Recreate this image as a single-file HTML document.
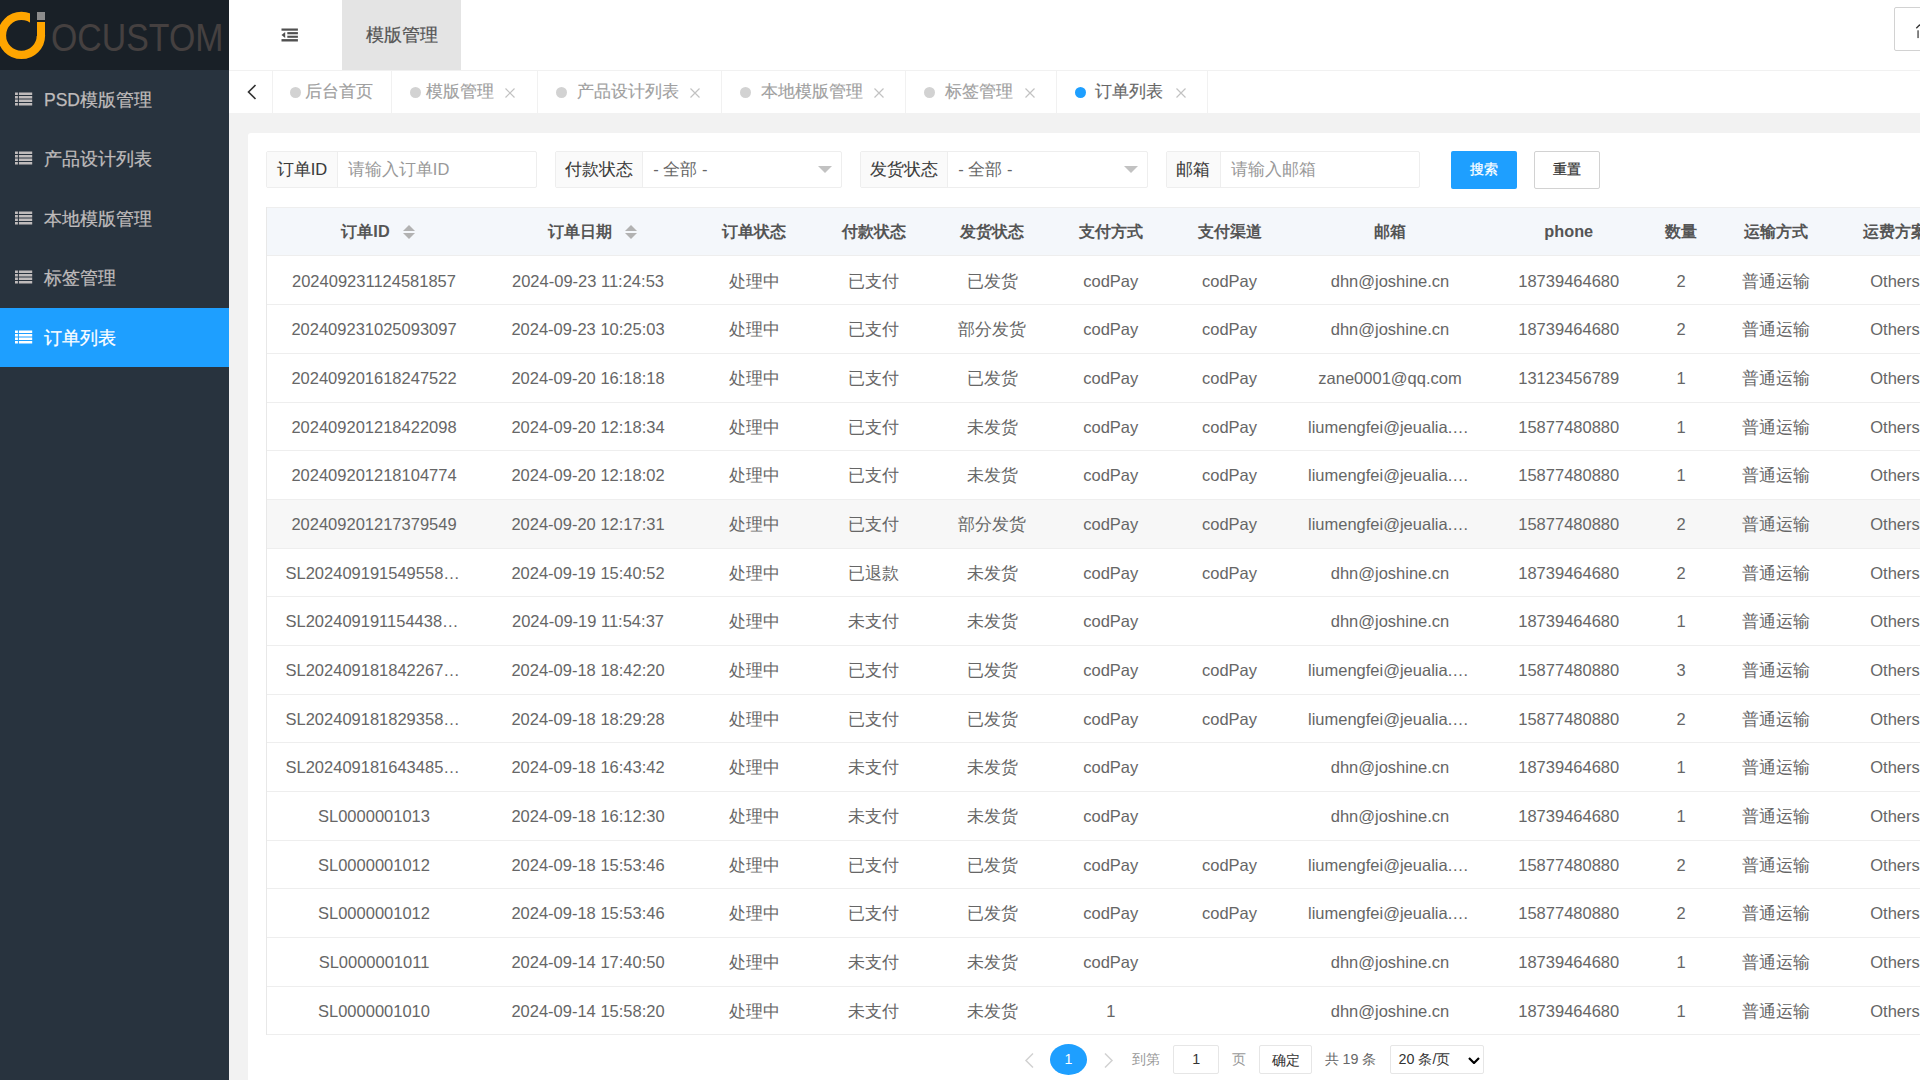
<!DOCTYPE html>
<html><head><meta charset="utf-8"><style>
*{margin:0;padding:0;box-sizing:border-box}
html,body{width:1920px;height:1080px;overflow:hidden;background:#f2f2f2;font-family:"Liberation Sans",sans-serif;position:relative}
.abs{position:absolute}
#side{position:absolute;left:0;top:0;width:229px;height:1080px;background:#28333e}
#logo{position:absolute;left:0;top:0;width:229px;height:70px;background:#192027;overflow:hidden}
.mi{position:absolute;left:0;width:229px;height:59.4px;color:rgb(191,187,187);font-size:17.5px}
.mi.active{background:#1e9fff;color:#fff}
.mi .ic{position:absolute;left:15px;top:22.4px;width:18px;height:14px;line-height:0}
.mi .mt{position:absolute;left:44px;top:1px;line-height:59.4px;white-space:nowrap}
#header{position:absolute;left:229px;top:0;width:1691px;height:70px;background:#fff}
#hdrtab{position:absolute;left:342px;top:0;width:119px;height:70px;background:#e4e4e4;color:#565656;font-size:17.5px;line-height:70px;text-align:center}
#tabbar{position:absolute;left:229px;top:70px;width:1691px;height:43px;background:#fff;border-top:1px solid #f1f1f1}
.tsep{position:absolute;top:71px;width:1px;height:42px;background:#f1f1f1}
.tdot{position:absolute;top:86.7px;width:11px;height:11px;border-radius:50%}
.ttxt{position:absolute;top:70px;height:43px;line-height:43px;font-size:16.6px;white-space:nowrap}
.tclose{position:absolute;top:88px;width:10px;height:10px;line-height:0}
#card{position:absolute;left:248px;top:132.5px;width:1700px;height:1000px;background:#fff;border-radius:3px}
.ig{position:absolute;top:151.2px;height:37.2px;border:1px solid #eee;border-radius:2px;background:#fff;font-size:16.5px}
.ig .lab{position:absolute;left:0;top:0;height:100%;background:#fafafa;border-right:1px solid #eee;color:#3a3a3a;line-height:35px;text-align:center;white-space:nowrap}
.ig .val{position:absolute;top:0;height:100%;line-height:35px;white-space:nowrap;color:#999}
.ig .val.sel{color:#666}
.tri{position:absolute;top:13.7px;width:0;height:0;border-left:7px solid transparent;border-right:7px solid transparent;border-top:7.5px solid #c2c2c2}
.btn{position:absolute;top:150.8px;height:37.9px;border-radius:2px;font-size:14.3px;line-height:37.9px;text-align:center}
.thead{position:absolute;left:266.5px;width:1700px;background:#f4f7fb;border-top:1px solid #eee;border-bottom:1px solid #eee}
#tblleft{position:absolute;left:266px;top:207px;width:1px;height:828px;background:#e8e8e8}
.th{position:absolute;display:flex;align-items:center;justify-content:center;font-weight:bold;font-size:16.3px;color:#555;white-space:nowrap}
.th .sort{margin-left:13px;margin-right:-8px}
.tr{position:absolute;left:266.5px;width:1700px;border-bottom:1px solid #eee}
.tr.hover{background:#f7f7f7}
.td{position:absolute;padding:0 19px;text-align:center;overflow:hidden;text-overflow:ellipsis;white-space:nowrap;font-size:16.5px;color:#666}
#pager{font-size:14.3px}
.mi .mt,#hdrtab,.btn{-webkit-text-stroke:0.25px currentColor}
.ig .lab{-webkit-text-stroke:0.08px currentColor}
.ttxt{-webkit-text-stroke:0.15px currentColor}
</style></head><body>
<div id="side">
<div id="logo"><svg width="229" height="70" viewBox="0 0 229 70" style="position:absolute;left:0;top:0">
<circle cx="21.4" cy="35.4" r="19.5" fill="none" stroke="#ffa500" stroke-width="8.4"/>
<rect x="30" y="0" width="7" height="36" fill="#192027"/><rect x="37" y="0" width="10" height="22" fill="#192027"/>
<rect x="37" y="22" width="8" height="13.4" fill="#ffa500"/>
<rect x="37" y="12" width="8" height="8" fill="#8c8c8c"/>
<text x="51" y="51.3" font-family="Liberation Sans" font-size="39.6" fill="#454040" textLength="172.5" lengthAdjust="spacingAndGlyphs">OCUSTOM</text>
</svg></div>
<div class="mi" style="top:70.0px"><span class="ic" style="top:22.00px"><svg width="18" height="14" viewBox="0 0 18 14" style="display:block"><g fill="currentColor"><rect x="0" y="0.5" width="2.9" height="2.5"/><rect x="3.9" y="0.5" width="13.3" height="2.5"/><rect x="0" y="4" width="2.9" height="2.5"/><rect x="3.9" y="4" width="13.3" height="2.5"/><rect x="0" y="7.5" width="2.9" height="2.5"/><rect x="3.9" y="7.5" width="13.3" height="2.5"/><rect x="0" y="11" width="2.9" height="2.5"/><rect x="3.9" y="11" width="13.3" height="2.5"/></g></svg></span><span class="mt">PSD模版管理</span></div>
<div class="mi" style="top:129.4px"><span class="ic" style="top:21.60px"><svg width="18" height="14" viewBox="0 0 18 14" style="display:block"><g fill="currentColor"><rect x="0" y="0.5" width="2.9" height="2.5"/><rect x="3.9" y="0.5" width="13.3" height="2.5"/><rect x="0" y="4" width="2.9" height="2.5"/><rect x="3.9" y="4" width="13.3" height="2.5"/><rect x="0" y="7.5" width="2.9" height="2.5"/><rect x="3.9" y="7.5" width="13.3" height="2.5"/><rect x="0" y="11" width="2.9" height="2.5"/><rect x="3.9" y="11" width="13.3" height="2.5"/></g></svg></span><span class="mt">产品设计列表</span></div>
<div class="mi" style="top:188.8px"><span class="ic" style="top:22.20px"><svg width="18" height="14" viewBox="0 0 18 14" style="display:block"><g fill="currentColor"><rect x="0" y="0.5" width="2.9" height="2.5"/><rect x="3.9" y="0.5" width="13.3" height="2.5"/><rect x="0" y="4" width="2.9" height="2.5"/><rect x="3.9" y="4" width="13.3" height="2.5"/><rect x="0" y="7.5" width="2.9" height="2.5"/><rect x="3.9" y="7.5" width="13.3" height="2.5"/><rect x="0" y="11" width="2.9" height="2.5"/><rect x="3.9" y="11" width="13.3" height="2.5"/></g></svg></span><span class="mt">本地模版管理</span></div>
<div class="mi" style="top:248.2px"><span class="ic" style="top:21.80px"><svg width="18" height="14" viewBox="0 0 18 14" style="display:block"><g fill="currentColor"><rect x="0" y="0.5" width="2.9" height="2.5"/><rect x="3.9" y="0.5" width="13.3" height="2.5"/><rect x="0" y="4" width="2.9" height="2.5"/><rect x="3.9" y="4" width="13.3" height="2.5"/><rect x="0" y="7.5" width="2.9" height="2.5"/><rect x="3.9" y="7.5" width="13.3" height="2.5"/><rect x="0" y="11" width="2.9" height="2.5"/><rect x="3.9" y="11" width="13.3" height="2.5"/></g></svg></span><span class="mt">标签管理</span></div>
<div class="mi active" style="top:307.6px"><span class="ic" style="top:22.40px"><svg width="18" height="14" viewBox="0 0 18 14" style="display:block"><g fill="currentColor"><rect x="0" y="0.5" width="2.9" height="2.5"/><rect x="3.9" y="0.5" width="13.3" height="2.5"/><rect x="0" y="4" width="2.9" height="2.5"/><rect x="3.9" y="4" width="13.3" height="2.5"/><rect x="0" y="7.5" width="2.9" height="2.5"/><rect x="3.9" y="7.5" width="13.3" height="2.5"/><rect x="0" y="11" width="2.9" height="2.5"/><rect x="3.9" y="11" width="13.3" height="2.5"/></g></svg></span><span class="mt">订单列表</span></div>
</div>
<div id="header">
<svg style="position:absolute;left:52px;top:28px" width="18" height="15" viewBox="0 0 18 15"><rect x="6.3" y="6" width="10.6" height="2" fill="#cfcfcf"/><g fill="#505050"><rect x="0.5" y="0.5" width="16.4" height="2.2"/><rect x="6.3" y="4.1" width="10.6" height="1.9"/><rect x="6.3" y="8" width="10.6" height="1.8"/><path d="M0.5 7L4.2 4.1V9.9Z"/><rect x="0.5" y="11.1" width="16.4" height="2.4"/></g></svg>
</div>
<div id="hdrtab">模版管理</div>
<div style="position:absolute;left:1894.4px;top:7.4px;width:40px;height:44px;border:1px solid #d2d2d2;border-radius:2px;background:#fff"></div>
<svg style="position:absolute;left:1914px;top:22px" width="6" height="18" viewBox="0 0 6 18"><path d="M2.3 6.2L6 2.5" stroke="#333" stroke-width="1.3" fill="none"/><rect x="3.4" y="8.3" width="1.3" height="7.8" fill="#444"/></svg>
<div id="tabbar"></div>
<svg style="position:absolute;left:247px;top:84px" width="10" height="16" viewBox="0 0 10 16"><path d="M8.5 1L1.5 8L8.5 15" fill="none" stroke="#333" stroke-width="1.6"/></svg>
<div class="tsep" style="left:391.0px"></div>
<div class="tdot" style="left:289.8px;background:#d2d2d2"></div>
<div class="ttxt" style="left:305.2px;color:#a0a0a0">后台首页</div>
<div class="tsep" style="left:536.9px"></div>
<div class="tdot" style="left:409.8px;background:#d2d2d2"></div>
<div class="ttxt" style="left:426.0px;color:#a0a0a0">模版管理</div>
<div class="tclose" style="left:505.4px"><svg width="10" height="10" viewBox="0 0 10 10"><path d="M0.5 0.5L9.5 9.5M9.5 0.5L0.5 9.5" stroke="#c2c2c2" stroke-width="1.2"/></svg></div>
<div class="tsep" style="left:720.8px"></div>
<div class="tdot" style="left:556.2px;background:#d2d2d2"></div>
<div class="ttxt" style="left:577.1px;color:#a0a0a0">产品设计列表</div>
<div class="tclose" style="left:690.0px"><svg width="10" height="10" viewBox="0 0 10 10"><path d="M0.5 0.5L9.5 9.5M9.5 0.5L0.5 9.5" stroke="#c2c2c2" stroke-width="1.2"/></svg></div>
<div class="tsep" style="left:905.4px"></div>
<div class="tdot" style="left:740.0px;background:#d2d2d2"></div>
<div class="ttxt" style="left:761.3px;color:#a0a0a0">本地模版管理</div>
<div class="tclose" style="left:873.7px"><svg width="10" height="10" viewBox="0 0 10 10"><path d="M0.5 0.5L9.5 9.5M9.5 0.5L0.5 9.5" stroke="#c2c2c2" stroke-width="1.2"/></svg></div>
<div class="tsep" style="left:1055.8px"></div>
<div class="tdot" style="left:924.0px;background:#d2d2d2"></div>
<div class="ttxt" style="left:945.3px;color:#a0a0a0">标签管理</div>
<div class="tclose" style="left:1025.0px"><svg width="10" height="10" viewBox="0 0 10 10"><path d="M0.5 0.5L9.5 9.5M9.5 0.5L0.5 9.5" stroke="#c2c2c2" stroke-width="1.2"/></svg></div>
<div class="tsep" style="left:1206.8px"></div>
<div class="tdot" style="left:1075.0px;background:#1e9fff"></div>
<div class="ttxt" style="left:1095.4px;color:#666">订单列表</div>
<div class="tclose" style="left:1175.5px"><svg width="10" height="10" viewBox="0 0 10 10"><path d="M0.5 0.5L9.5 9.5M9.5 0.5L0.5 9.5" stroke="#c2c2c2" stroke-width="1.2"/></svg></div>
<div class="tsep" style="left:272.2px"></div>
<div id="card"></div>
<div class="ig" style="left:266.3px;width:271.2px"><div class="lab" style="width:70.4px">订单ID</div><div class="val" style="left:80.5px">请输入订单ID</div></div>
<div class="ig" style="left:555.3px;width:287.2px"><div class="lab" style="width:87.2px">付款状态</div><div class="val sel" style="left:97px">- 全部 -</div><div class="tri" style="left:262px"></div></div>
<div class="ig" style="left:860.3px;width:288px"><div class="lab" style="width:87.2px">发货状态</div><div class="val sel" style="left:97px">- 全部 -</div><div class="tri" style="left:263px"></div></div>
<div class="ig" style="left:1166.3px;width:254px"><div class="lab" style="width:53.4px">邮箱</div><div class="val" style="left:63.5px">请输入邮箱</div></div>
<div class="btn" style="left:1450.8px;width:66.2px;background:#1e9fff;color:#fff">搜索</div>
<div class="btn" style="left:1534.2px;width:65.8px;background:#fff;border:1px solid #d2d2d2;color:#333;line-height:35.9px">重置</div>
<div class="thead" style="top:207px;height:49px"></div>
<div class="th" style="left:266.5px;width:215.0px;top:207px;height:49px"><span>订单ID</span><svg class="sort" width="12" height="14" viewBox="0 0 12 14"><path d="M6 0L12 6H0Z" fill="#b2b2b2"/><path d="M6 14L12 8H0Z" fill="#b2b2b2"/></svg></div>
<div class="th" style="left:481.5px;width:213.0px;top:207px;height:49px"><span>订单日期</span><svg class="sort" width="12" height="14" viewBox="0 0 12 14"><path d="M6 0L12 6H0Z" fill="#b2b2b2"/><path d="M6 14L12 8H0Z" fill="#b2b2b2"/></svg></div>
<div class="th" style="left:694.5px;width:119.5px;top:207px;height:49px"><span>订单状态</span></div>
<div class="th" style="left:814px;width:119px;top:207px;height:49px"><span>付款状态</span></div>
<div class="th" style="left:933px;width:118.5px;top:207px;height:49px"><span>发货状态</span></div>
<div class="th" style="left:1051.5px;width:118.5px;top:207px;height:49px"><span>支付方式</span></div>
<div class="th" style="left:1170px;width:119px;top:207px;height:49px"><span>支付渠道</span></div>
<div class="th" style="left:1289px;width:202px;top:207px;height:49px"><span>邮箱</span></div>
<div class="th" style="left:1491px;width:155.5px;top:207px;height:49px"><span>phone</span></div>
<div class="th" style="left:1646.5px;width:69.0px;top:207px;height:49px"><span>数量</span></div>
<div class="th" style="left:1715.5px;width:121.5px;top:207px;height:49px"><span>运输方式</span></div>
<div class="th" style="left:1837px;width:116px;top:207px;height:49px"><span>运费方案</span></div>
<div class="tr" style="top:256.50px;height:48.68px"></div>
<div class="td" style="left:266.5px;width:215.0px;top:256.50px;height:48.68px;line-height:48.68px">202409231124581857</div>
<div class="td" style="left:481.5px;width:213.0px;top:256.50px;height:48.68px;line-height:48.68px">2024-09-23 11:24:53</div>
<div class="td" style="left:694.5px;width:119.5px;top:256.50px;height:48.68px;line-height:48.68px">处理中</div>
<div class="td" style="left:814px;width:119px;top:256.50px;height:48.68px;line-height:48.68px">已支付</div>
<div class="td" style="left:933px;width:118.5px;top:256.50px;height:48.68px;line-height:48.68px">已发货</div>
<div class="td" style="left:1051.5px;width:118.5px;top:256.50px;height:48.68px;line-height:48.68px">codPay</div>
<div class="td" style="left:1170px;width:119px;top:256.50px;height:48.68px;line-height:48.68px">codPay</div>
<div class="td" style="left:1289px;width:202px;top:256.50px;height:48.68px;line-height:48.68px">dhn@joshine.cn</div>
<div class="td" style="left:1491px;width:155.5px;top:256.50px;height:48.68px;line-height:48.68px">18739464680</div>
<div class="td" style="left:1646.5px;width:69.0px;top:256.50px;height:48.68px;line-height:48.68px">2</div>
<div class="td" style="left:1715.5px;width:121.5px;top:256.50px;height:48.68px;line-height:48.68px">普通运输</div>
<div class="td" style="left:1837px;width:116px;top:256.50px;height:48.68px;line-height:48.68px">Others</div>
<div class="tr" style="top:305.18px;height:48.68px"></div>
<div class="td" style="left:266.5px;width:215.0px;top:305.18px;height:48.68px;line-height:48.68px">202409231025093097</div>
<div class="td" style="left:481.5px;width:213.0px;top:305.18px;height:48.68px;line-height:48.68px">2024-09-23 10:25:03</div>
<div class="td" style="left:694.5px;width:119.5px;top:305.18px;height:48.68px;line-height:48.68px">处理中</div>
<div class="td" style="left:814px;width:119px;top:305.18px;height:48.68px;line-height:48.68px">已支付</div>
<div class="td" style="left:933px;width:118.5px;top:305.18px;height:48.68px;line-height:48.68px">部分发货</div>
<div class="td" style="left:1051.5px;width:118.5px;top:305.18px;height:48.68px;line-height:48.68px">codPay</div>
<div class="td" style="left:1170px;width:119px;top:305.18px;height:48.68px;line-height:48.68px">codPay</div>
<div class="td" style="left:1289px;width:202px;top:305.18px;height:48.68px;line-height:48.68px">dhn@joshine.cn</div>
<div class="td" style="left:1491px;width:155.5px;top:305.18px;height:48.68px;line-height:48.68px">18739464680</div>
<div class="td" style="left:1646.5px;width:69.0px;top:305.18px;height:48.68px;line-height:48.68px">2</div>
<div class="td" style="left:1715.5px;width:121.5px;top:305.18px;height:48.68px;line-height:48.68px">普通运输</div>
<div class="td" style="left:1837px;width:116px;top:305.18px;height:48.68px;line-height:48.68px">Others</div>
<div class="tr" style="top:353.86px;height:48.68px"></div>
<div class="td" style="left:266.5px;width:215.0px;top:353.86px;height:48.68px;line-height:48.68px">202409201618247522</div>
<div class="td" style="left:481.5px;width:213.0px;top:353.86px;height:48.68px;line-height:48.68px">2024-09-20 16:18:18</div>
<div class="td" style="left:694.5px;width:119.5px;top:353.86px;height:48.68px;line-height:48.68px">处理中</div>
<div class="td" style="left:814px;width:119px;top:353.86px;height:48.68px;line-height:48.68px">已支付</div>
<div class="td" style="left:933px;width:118.5px;top:353.86px;height:48.68px;line-height:48.68px">已发货</div>
<div class="td" style="left:1051.5px;width:118.5px;top:353.86px;height:48.68px;line-height:48.68px">codPay</div>
<div class="td" style="left:1170px;width:119px;top:353.86px;height:48.68px;line-height:48.68px">codPay</div>
<div class="td" style="left:1289px;width:202px;top:353.86px;height:48.68px;line-height:48.68px">zane0001@qq.com</div>
<div class="td" style="left:1491px;width:155.5px;top:353.86px;height:48.68px;line-height:48.68px">13123456789</div>
<div class="td" style="left:1646.5px;width:69.0px;top:353.86px;height:48.68px;line-height:48.68px">1</div>
<div class="td" style="left:1715.5px;width:121.5px;top:353.86px;height:48.68px;line-height:48.68px">普通运输</div>
<div class="td" style="left:1837px;width:116px;top:353.86px;height:48.68px;line-height:48.68px">Others</div>
<div class="tr" style="top:402.54px;height:48.68px"></div>
<div class="td" style="left:266.5px;width:215.0px;top:402.54px;height:48.68px;line-height:48.68px">202409201218422098</div>
<div class="td" style="left:481.5px;width:213.0px;top:402.54px;height:48.68px;line-height:48.68px">2024-09-20 12:18:34</div>
<div class="td" style="left:694.5px;width:119.5px;top:402.54px;height:48.68px;line-height:48.68px">处理中</div>
<div class="td" style="left:814px;width:119px;top:402.54px;height:48.68px;line-height:48.68px">已支付</div>
<div class="td" style="left:933px;width:118.5px;top:402.54px;height:48.68px;line-height:48.68px">未发货</div>
<div class="td" style="left:1051.5px;width:118.5px;top:402.54px;height:48.68px;line-height:48.68px">codPay</div>
<div class="td" style="left:1170px;width:119px;top:402.54px;height:48.68px;line-height:48.68px">codPay</div>
<div class="td" style="left:1289px;width:202px;top:402.54px;height:48.68px;line-height:48.68px">liumengfei@jeualia.com</div>
<div class="td" style="left:1491px;width:155.5px;top:402.54px;height:48.68px;line-height:48.68px">15877480880</div>
<div class="td" style="left:1646.5px;width:69.0px;top:402.54px;height:48.68px;line-height:48.68px">1</div>
<div class="td" style="left:1715.5px;width:121.5px;top:402.54px;height:48.68px;line-height:48.68px">普通运输</div>
<div class="td" style="left:1837px;width:116px;top:402.54px;height:48.68px;line-height:48.68px">Others</div>
<div class="tr" style="top:451.22px;height:48.68px"></div>
<div class="td" style="left:266.5px;width:215.0px;top:451.22px;height:48.68px;line-height:48.68px">202409201218104774</div>
<div class="td" style="left:481.5px;width:213.0px;top:451.22px;height:48.68px;line-height:48.68px">2024-09-20 12:18:02</div>
<div class="td" style="left:694.5px;width:119.5px;top:451.22px;height:48.68px;line-height:48.68px">处理中</div>
<div class="td" style="left:814px;width:119px;top:451.22px;height:48.68px;line-height:48.68px">已支付</div>
<div class="td" style="left:933px;width:118.5px;top:451.22px;height:48.68px;line-height:48.68px">未发货</div>
<div class="td" style="left:1051.5px;width:118.5px;top:451.22px;height:48.68px;line-height:48.68px">codPay</div>
<div class="td" style="left:1170px;width:119px;top:451.22px;height:48.68px;line-height:48.68px">codPay</div>
<div class="td" style="left:1289px;width:202px;top:451.22px;height:48.68px;line-height:48.68px">liumengfei@jeualia.com</div>
<div class="td" style="left:1491px;width:155.5px;top:451.22px;height:48.68px;line-height:48.68px">15877480880</div>
<div class="td" style="left:1646.5px;width:69.0px;top:451.22px;height:48.68px;line-height:48.68px">1</div>
<div class="td" style="left:1715.5px;width:121.5px;top:451.22px;height:48.68px;line-height:48.68px">普通运输</div>
<div class="td" style="left:1837px;width:116px;top:451.22px;height:48.68px;line-height:48.68px">Others</div>
<div class="tr hover" style="top:499.90px;height:48.68px"></div>
<div class="td" style="left:266.5px;width:215.0px;top:499.90px;height:48.68px;line-height:48.68px">202409201217379549</div>
<div class="td" style="left:481.5px;width:213.0px;top:499.90px;height:48.68px;line-height:48.68px">2024-09-20 12:17:31</div>
<div class="td" style="left:694.5px;width:119.5px;top:499.90px;height:48.68px;line-height:48.68px">处理中</div>
<div class="td" style="left:814px;width:119px;top:499.90px;height:48.68px;line-height:48.68px">已支付</div>
<div class="td" style="left:933px;width:118.5px;top:499.90px;height:48.68px;line-height:48.68px">部分发货</div>
<div class="td" style="left:1051.5px;width:118.5px;top:499.90px;height:48.68px;line-height:48.68px">codPay</div>
<div class="td" style="left:1170px;width:119px;top:499.90px;height:48.68px;line-height:48.68px">codPay</div>
<div class="td" style="left:1289px;width:202px;top:499.90px;height:48.68px;line-height:48.68px">liumengfei@jeualia.com</div>
<div class="td" style="left:1491px;width:155.5px;top:499.90px;height:48.68px;line-height:48.68px">15877480880</div>
<div class="td" style="left:1646.5px;width:69.0px;top:499.90px;height:48.68px;line-height:48.68px">2</div>
<div class="td" style="left:1715.5px;width:121.5px;top:499.90px;height:48.68px;line-height:48.68px">普通运输</div>
<div class="td" style="left:1837px;width:116px;top:499.90px;height:48.68px;line-height:48.68px">Others</div>
<div class="tr" style="top:548.58px;height:48.68px"></div>
<div class="td" style="left:266.5px;width:215.0px;top:548.58px;height:48.68px;line-height:48.68px">SL202409191549558123</div>
<div class="td" style="left:481.5px;width:213.0px;top:548.58px;height:48.68px;line-height:48.68px">2024-09-19 15:40:52</div>
<div class="td" style="left:694.5px;width:119.5px;top:548.58px;height:48.68px;line-height:48.68px">处理中</div>
<div class="td" style="left:814px;width:119px;top:548.58px;height:48.68px;line-height:48.68px">已退款</div>
<div class="td" style="left:933px;width:118.5px;top:548.58px;height:48.68px;line-height:48.68px">未发货</div>
<div class="td" style="left:1051.5px;width:118.5px;top:548.58px;height:48.68px;line-height:48.68px">codPay</div>
<div class="td" style="left:1170px;width:119px;top:548.58px;height:48.68px;line-height:48.68px">codPay</div>
<div class="td" style="left:1289px;width:202px;top:548.58px;height:48.68px;line-height:48.68px">dhn@joshine.cn</div>
<div class="td" style="left:1491px;width:155.5px;top:548.58px;height:48.68px;line-height:48.68px">18739464680</div>
<div class="td" style="left:1646.5px;width:69.0px;top:548.58px;height:48.68px;line-height:48.68px">2</div>
<div class="td" style="left:1715.5px;width:121.5px;top:548.58px;height:48.68px;line-height:48.68px">普通运输</div>
<div class="td" style="left:1837px;width:116px;top:548.58px;height:48.68px;line-height:48.68px">Others</div>
<div class="tr" style="top:597.26px;height:48.68px"></div>
<div class="td" style="left:266.5px;width:215.0px;top:597.26px;height:48.68px;line-height:48.68px">SL202409191154438123</div>
<div class="td" style="left:481.5px;width:213.0px;top:597.26px;height:48.68px;line-height:48.68px">2024-09-19 11:54:37</div>
<div class="td" style="left:694.5px;width:119.5px;top:597.26px;height:48.68px;line-height:48.68px">处理中</div>
<div class="td" style="left:814px;width:119px;top:597.26px;height:48.68px;line-height:48.68px">未支付</div>
<div class="td" style="left:933px;width:118.5px;top:597.26px;height:48.68px;line-height:48.68px">未发货</div>
<div class="td" style="left:1051.5px;width:118.5px;top:597.26px;height:48.68px;line-height:48.68px">codPay</div>
<div class="td" style="left:1170px;width:119px;top:597.26px;height:48.68px;line-height:48.68px"></div>
<div class="td" style="left:1289px;width:202px;top:597.26px;height:48.68px;line-height:48.68px">dhn@joshine.cn</div>
<div class="td" style="left:1491px;width:155.5px;top:597.26px;height:48.68px;line-height:48.68px">18739464680</div>
<div class="td" style="left:1646.5px;width:69.0px;top:597.26px;height:48.68px;line-height:48.68px">1</div>
<div class="td" style="left:1715.5px;width:121.5px;top:597.26px;height:48.68px;line-height:48.68px">普通运输</div>
<div class="td" style="left:1837px;width:116px;top:597.26px;height:48.68px;line-height:48.68px">Others</div>
<div class="tr" style="top:645.94px;height:48.68px"></div>
<div class="td" style="left:266.5px;width:215.0px;top:645.94px;height:48.68px;line-height:48.68px">SL202409181842267123</div>
<div class="td" style="left:481.5px;width:213.0px;top:645.94px;height:48.68px;line-height:48.68px">2024-09-18 18:42:20</div>
<div class="td" style="left:694.5px;width:119.5px;top:645.94px;height:48.68px;line-height:48.68px">处理中</div>
<div class="td" style="left:814px;width:119px;top:645.94px;height:48.68px;line-height:48.68px">已支付</div>
<div class="td" style="left:933px;width:118.5px;top:645.94px;height:48.68px;line-height:48.68px">已发货</div>
<div class="td" style="left:1051.5px;width:118.5px;top:645.94px;height:48.68px;line-height:48.68px">codPay</div>
<div class="td" style="left:1170px;width:119px;top:645.94px;height:48.68px;line-height:48.68px">codPay</div>
<div class="td" style="left:1289px;width:202px;top:645.94px;height:48.68px;line-height:48.68px">liumengfei@jeualia.com</div>
<div class="td" style="left:1491px;width:155.5px;top:645.94px;height:48.68px;line-height:48.68px">15877480880</div>
<div class="td" style="left:1646.5px;width:69.0px;top:645.94px;height:48.68px;line-height:48.68px">3</div>
<div class="td" style="left:1715.5px;width:121.5px;top:645.94px;height:48.68px;line-height:48.68px">普通运输</div>
<div class="td" style="left:1837px;width:116px;top:645.94px;height:48.68px;line-height:48.68px">Others</div>
<div class="tr" style="top:694.62px;height:48.68px"></div>
<div class="td" style="left:266.5px;width:215.0px;top:694.62px;height:48.68px;line-height:48.68px">SL202409181829358123</div>
<div class="td" style="left:481.5px;width:213.0px;top:694.62px;height:48.68px;line-height:48.68px">2024-09-18 18:29:28</div>
<div class="td" style="left:694.5px;width:119.5px;top:694.62px;height:48.68px;line-height:48.68px">处理中</div>
<div class="td" style="left:814px;width:119px;top:694.62px;height:48.68px;line-height:48.68px">已支付</div>
<div class="td" style="left:933px;width:118.5px;top:694.62px;height:48.68px;line-height:48.68px">已发货</div>
<div class="td" style="left:1051.5px;width:118.5px;top:694.62px;height:48.68px;line-height:48.68px">codPay</div>
<div class="td" style="left:1170px;width:119px;top:694.62px;height:48.68px;line-height:48.68px">codPay</div>
<div class="td" style="left:1289px;width:202px;top:694.62px;height:48.68px;line-height:48.68px">liumengfei@jeualia.com</div>
<div class="td" style="left:1491px;width:155.5px;top:694.62px;height:48.68px;line-height:48.68px">15877480880</div>
<div class="td" style="left:1646.5px;width:69.0px;top:694.62px;height:48.68px;line-height:48.68px">2</div>
<div class="td" style="left:1715.5px;width:121.5px;top:694.62px;height:48.68px;line-height:48.68px">普通运输</div>
<div class="td" style="left:1837px;width:116px;top:694.62px;height:48.68px;line-height:48.68px">Others</div>
<div class="tr" style="top:743.30px;height:48.68px"></div>
<div class="td" style="left:266.5px;width:215.0px;top:743.30px;height:48.68px;line-height:48.68px">SL202409181643485123</div>
<div class="td" style="left:481.5px;width:213.0px;top:743.30px;height:48.68px;line-height:48.68px">2024-09-18 16:43:42</div>
<div class="td" style="left:694.5px;width:119.5px;top:743.30px;height:48.68px;line-height:48.68px">处理中</div>
<div class="td" style="left:814px;width:119px;top:743.30px;height:48.68px;line-height:48.68px">未支付</div>
<div class="td" style="left:933px;width:118.5px;top:743.30px;height:48.68px;line-height:48.68px">未发货</div>
<div class="td" style="left:1051.5px;width:118.5px;top:743.30px;height:48.68px;line-height:48.68px">codPay</div>
<div class="td" style="left:1170px;width:119px;top:743.30px;height:48.68px;line-height:48.68px"></div>
<div class="td" style="left:1289px;width:202px;top:743.30px;height:48.68px;line-height:48.68px">dhn@joshine.cn</div>
<div class="td" style="left:1491px;width:155.5px;top:743.30px;height:48.68px;line-height:48.68px">18739464680</div>
<div class="td" style="left:1646.5px;width:69.0px;top:743.30px;height:48.68px;line-height:48.68px">1</div>
<div class="td" style="left:1715.5px;width:121.5px;top:743.30px;height:48.68px;line-height:48.68px">普通运输</div>
<div class="td" style="left:1837px;width:116px;top:743.30px;height:48.68px;line-height:48.68px">Others</div>
<div class="tr" style="top:791.98px;height:48.68px"></div>
<div class="td" style="left:266.5px;width:215.0px;top:791.98px;height:48.68px;line-height:48.68px">SL0000001013</div>
<div class="td" style="left:481.5px;width:213.0px;top:791.98px;height:48.68px;line-height:48.68px">2024-09-18 16:12:30</div>
<div class="td" style="left:694.5px;width:119.5px;top:791.98px;height:48.68px;line-height:48.68px">处理中</div>
<div class="td" style="left:814px;width:119px;top:791.98px;height:48.68px;line-height:48.68px">未支付</div>
<div class="td" style="left:933px;width:118.5px;top:791.98px;height:48.68px;line-height:48.68px">未发货</div>
<div class="td" style="left:1051.5px;width:118.5px;top:791.98px;height:48.68px;line-height:48.68px">codPay</div>
<div class="td" style="left:1170px;width:119px;top:791.98px;height:48.68px;line-height:48.68px"></div>
<div class="td" style="left:1289px;width:202px;top:791.98px;height:48.68px;line-height:48.68px">dhn@joshine.cn</div>
<div class="td" style="left:1491px;width:155.5px;top:791.98px;height:48.68px;line-height:48.68px">18739464680</div>
<div class="td" style="left:1646.5px;width:69.0px;top:791.98px;height:48.68px;line-height:48.68px">1</div>
<div class="td" style="left:1715.5px;width:121.5px;top:791.98px;height:48.68px;line-height:48.68px">普通运输</div>
<div class="td" style="left:1837px;width:116px;top:791.98px;height:48.68px;line-height:48.68px">Others</div>
<div class="tr" style="top:840.66px;height:48.68px"></div>
<div class="td" style="left:266.5px;width:215.0px;top:840.66px;height:48.68px;line-height:48.68px">SL0000001012</div>
<div class="td" style="left:481.5px;width:213.0px;top:840.66px;height:48.68px;line-height:48.68px">2024-09-18 15:53:46</div>
<div class="td" style="left:694.5px;width:119.5px;top:840.66px;height:48.68px;line-height:48.68px">处理中</div>
<div class="td" style="left:814px;width:119px;top:840.66px;height:48.68px;line-height:48.68px">已支付</div>
<div class="td" style="left:933px;width:118.5px;top:840.66px;height:48.68px;line-height:48.68px">已发货</div>
<div class="td" style="left:1051.5px;width:118.5px;top:840.66px;height:48.68px;line-height:48.68px">codPay</div>
<div class="td" style="left:1170px;width:119px;top:840.66px;height:48.68px;line-height:48.68px">codPay</div>
<div class="td" style="left:1289px;width:202px;top:840.66px;height:48.68px;line-height:48.68px">liumengfei@jeualia.com</div>
<div class="td" style="left:1491px;width:155.5px;top:840.66px;height:48.68px;line-height:48.68px">15877480880</div>
<div class="td" style="left:1646.5px;width:69.0px;top:840.66px;height:48.68px;line-height:48.68px">2</div>
<div class="td" style="left:1715.5px;width:121.5px;top:840.66px;height:48.68px;line-height:48.68px">普通运输</div>
<div class="td" style="left:1837px;width:116px;top:840.66px;height:48.68px;line-height:48.68px">Others</div>
<div class="tr" style="top:889.34px;height:48.68px"></div>
<div class="td" style="left:266.5px;width:215.0px;top:889.34px;height:48.68px;line-height:48.68px">SL0000001012</div>
<div class="td" style="left:481.5px;width:213.0px;top:889.34px;height:48.68px;line-height:48.68px">2024-09-18 15:53:46</div>
<div class="td" style="left:694.5px;width:119.5px;top:889.34px;height:48.68px;line-height:48.68px">处理中</div>
<div class="td" style="left:814px;width:119px;top:889.34px;height:48.68px;line-height:48.68px">已支付</div>
<div class="td" style="left:933px;width:118.5px;top:889.34px;height:48.68px;line-height:48.68px">已发货</div>
<div class="td" style="left:1051.5px;width:118.5px;top:889.34px;height:48.68px;line-height:48.68px">codPay</div>
<div class="td" style="left:1170px;width:119px;top:889.34px;height:48.68px;line-height:48.68px">codPay</div>
<div class="td" style="left:1289px;width:202px;top:889.34px;height:48.68px;line-height:48.68px">liumengfei@jeualia.com</div>
<div class="td" style="left:1491px;width:155.5px;top:889.34px;height:48.68px;line-height:48.68px">15877480880</div>
<div class="td" style="left:1646.5px;width:69.0px;top:889.34px;height:48.68px;line-height:48.68px">2</div>
<div class="td" style="left:1715.5px;width:121.5px;top:889.34px;height:48.68px;line-height:48.68px">普通运输</div>
<div class="td" style="left:1837px;width:116px;top:889.34px;height:48.68px;line-height:48.68px">Others</div>
<div class="tr" style="top:938.02px;height:48.68px"></div>
<div class="td" style="left:266.5px;width:215.0px;top:938.02px;height:48.68px;line-height:48.68px">SL0000001011</div>
<div class="td" style="left:481.5px;width:213.0px;top:938.02px;height:48.68px;line-height:48.68px">2024-09-14 17:40:50</div>
<div class="td" style="left:694.5px;width:119.5px;top:938.02px;height:48.68px;line-height:48.68px">处理中</div>
<div class="td" style="left:814px;width:119px;top:938.02px;height:48.68px;line-height:48.68px">未支付</div>
<div class="td" style="left:933px;width:118.5px;top:938.02px;height:48.68px;line-height:48.68px">未发货</div>
<div class="td" style="left:1051.5px;width:118.5px;top:938.02px;height:48.68px;line-height:48.68px">codPay</div>
<div class="td" style="left:1170px;width:119px;top:938.02px;height:48.68px;line-height:48.68px"></div>
<div class="td" style="left:1289px;width:202px;top:938.02px;height:48.68px;line-height:48.68px">dhn@joshine.cn</div>
<div class="td" style="left:1491px;width:155.5px;top:938.02px;height:48.68px;line-height:48.68px">18739464680</div>
<div class="td" style="left:1646.5px;width:69.0px;top:938.02px;height:48.68px;line-height:48.68px">1</div>
<div class="td" style="left:1715.5px;width:121.5px;top:938.02px;height:48.68px;line-height:48.68px">普通运输</div>
<div class="td" style="left:1837px;width:116px;top:938.02px;height:48.68px;line-height:48.68px">Others</div>
<div class="tr" style="top:986.70px;height:48.68px"></div>
<div class="td" style="left:266.5px;width:215.0px;top:986.70px;height:48.68px;line-height:48.68px">SL0000001010</div>
<div class="td" style="left:481.5px;width:213.0px;top:986.70px;height:48.68px;line-height:48.68px">2024-09-14 15:58:20</div>
<div class="td" style="left:694.5px;width:119.5px;top:986.70px;height:48.68px;line-height:48.68px">处理中</div>
<div class="td" style="left:814px;width:119px;top:986.70px;height:48.68px;line-height:48.68px">未支付</div>
<div class="td" style="left:933px;width:118.5px;top:986.70px;height:48.68px;line-height:48.68px">未发货</div>
<div class="td" style="left:1051.5px;width:118.5px;top:986.70px;height:48.68px;line-height:48.68px">1</div>
<div class="td" style="left:1170px;width:119px;top:986.70px;height:48.68px;line-height:48.68px"></div>
<div class="td" style="left:1289px;width:202px;top:986.70px;height:48.68px;line-height:48.68px">dhn@joshine.cn</div>
<div class="td" style="left:1491px;width:155.5px;top:986.70px;height:48.68px;line-height:48.68px">18739464680</div>
<div class="td" style="left:1646.5px;width:69.0px;top:986.70px;height:48.68px;line-height:48.68px">1</div>
<div class="td" style="left:1715.5px;width:121.5px;top:986.70px;height:48.68px;line-height:48.68px">普通运输</div>
<div class="td" style="left:1837px;width:116px;top:986.70px;height:48.68px;line-height:48.68px">Others</div>
<div id="tblleft"></div>
<div id="pager">
<svg style="position:absolute;left:1023.5px;top:1052.5px" width="10" height="15" viewBox="0 0 10 15"><path d="M9 0.5L2 7.5L9 14.5" fill="none" stroke="#d2d2d2" stroke-width="1.5"/></svg>
<div style="position:absolute;left:1050px;top:1044.4px;width:37px;height:30.6px;border-radius:50%;background:#1e9fff;color:#fff;text-align:center;line-height:30.6px">1</div>
<svg style="position:absolute;left:1104px;top:1052.5px" width="10" height="15" viewBox="0 0 10 15"><path d="M1 0.5L8 7.5L1 14.5" fill="none" stroke="#d2d2d2" stroke-width="1.5"/></svg>
<div style="position:absolute;left:1132px;top:1044.4px;line-height:30px;color:#999">到第</div>
<div style="position:absolute;left:1173px;top:1045px;width:46.4px;height:29.4px;border:1px solid #e6e6e6;border-radius:2px;color:#333;text-align:center;line-height:27.4px">1</div>
<div style="position:absolute;left:1231.5px;top:1044.4px;line-height:30px;color:#999">页</div>
<div style="position:absolute;left:1258.7px;top:1044.5px;width:53.7px;height:29.8px;border:1px solid #e6e6e6;border-radius:2px;color:#333;text-align:center;line-height:29px">确定</div>
<div style="position:absolute;left:1324.6px;top:1044.4px;line-height:30px;color:#666;white-space:nowrap">共 19 条</div>
<div style="position:absolute;left:1389.6px;top:1045px;width:94.8px;height:29.3px;border:1px solid #e6e6e6;border-radius:2px;color:#333;line-height:27.3px;padding-left:8px;white-space:nowrap">20 条/页</div>
<svg style="position:absolute;left:1467.5px;top:1056.5px" width="12" height="7" viewBox="0 0 12 7"><path d="M1 1L6 6L11 1" fill="none" stroke="#000" stroke-width="2.2"/></svg>
</div>
</body></html>
